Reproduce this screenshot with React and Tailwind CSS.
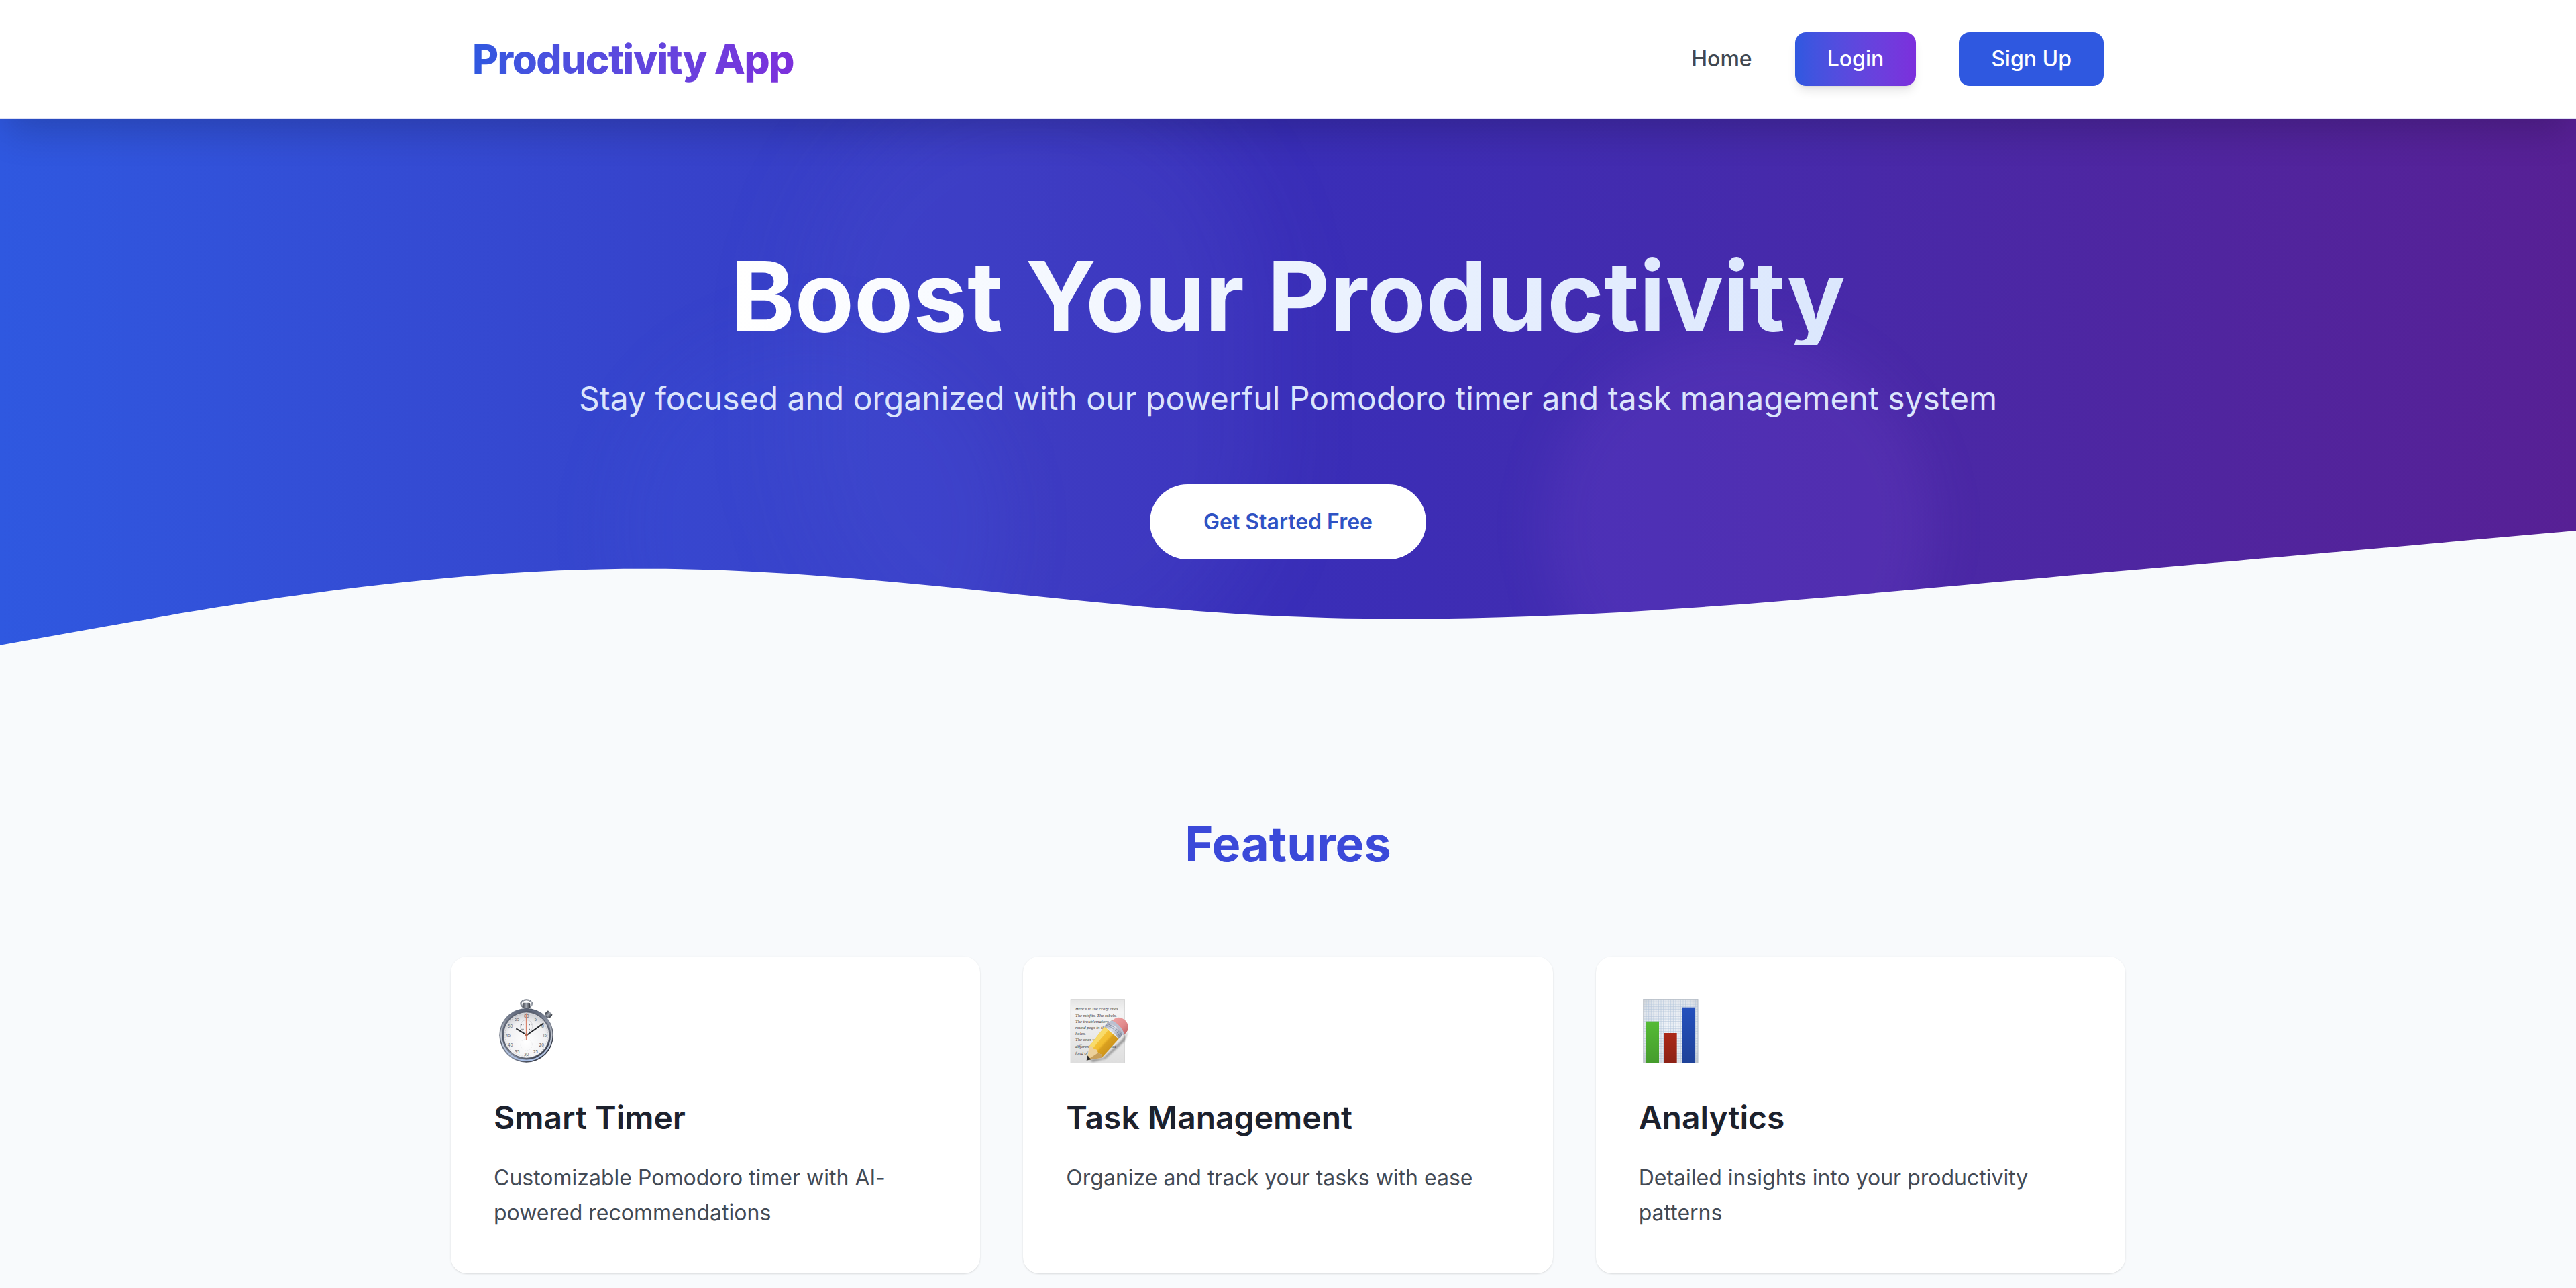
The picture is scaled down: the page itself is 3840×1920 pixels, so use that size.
function StopwatchIcon() {
  const marks = [
    ["60", 146, 112], ["5", 187, 125], ["10", 216, 157], ["15", 228, 199], ["20", 214, 240], ["25", 187, 270],
    ["30", 146, 283], ["35", 104, 270], ["40", 74, 240], ["45", 64, 199], ["50", 74, 157], ["55", 104, 125],
  ];
  const ticks = Array.from({ length: 60 }, (_, i) => i * 6);
  return (
    <svg viewBox="0 30 288 288" className="h-24 w-24 overflow-visible" role="img" aria-label="Stopwatch">
      <defs>
        <linearGradient id="steel" x1="0" y1="0" x2="1" y2="1">
          <stop offset="0" stopColor="#9aa3b4" />
          <stop offset="0.3" stopColor="#4d5565" />
          <stop offset="0.55" stopColor="#8b93a3" />
          <stop offset="0.8" stopColor="#3a3f4c" />
          <stop offset="1" stopColor="#23262e" />
        </linearGradient>
        <linearGradient id="rim" x1="0" y1="0" x2="0" y2="1">
          <stop offset="0" stopColor="#5b6478" />
          <stop offset="0.5" stopColor="#c3c7cf" />
          <stop offset="1" stopColor="#a9bfe6" />
        </linearGradient>
        <linearGradient id="crown" x1="0" y1="0" x2="1" y2="0">
          <stop offset="0" stopColor="#3b4049" />
          <stop offset="0.5" stopColor="#a3a8b1" />
          <stop offset="1" stopColor="#32363e" />
        </linearGradient>
        <radialGradient id="dial" cx="0.5" cy="0.65" r="0.6">
          <stop offset="0" stopColor="#ffffff" />
          <stop offset="0.75" stopColor="#f0f0f2" />
          <stop offset="1" stopColor="#d3d4d8" />
        </radialGradient>
      </defs>
      <ellipse cx="146" cy="49" rx="25" ry="18" fill="none" stroke="#6d7480" strokeWidth="6" />
      <ellipse cx="146" cy="49" rx="25" ry="18" fill="none" stroke="#c4c9d0" strokeWidth="2" />
      <rect x="136" y="60" width="20" height="16" fill="#7d838f" />
      <rect x="128" y="44" width="35" height="23" rx="5" fill="url(#crown)" />
      <g transform="rotate(42 244 98)">
        <rect x="237" y="98" width="14" height="20" fill="#5a606c" />
        <rect x="229" y="84" width="30" height="23" rx="6" fill="url(#crown)" />
      </g>
      <circle cx="146" cy="190" r="121" fill="url(#steel)" />
      <circle cx="146" cy="189" r="113" fill="none" stroke="url(#rim)" strokeWidth="7" />
      <circle cx="146" cy="188" r="105" fill="#5d6372" />
      <circle cx="146" cy="189" r="101" fill="url(#dial)" />
      <g stroke="#9a9ca2" strokeWidth="1">
        {ticks.map((a) => (
          <line key={a} x1="146" y1="91" x2="146" y2="96" transform={`rotate(${a} 146 189)`} />
        ))}
      </g>
      <g fill="none" stroke="#c2c3c8" strokeWidth="2">
        <circle cx="146" cy="149" r="28" />
        <circle cx="146" cy="232" r="26" strokeDasharray="3 8" opacity="0.6" />
      </g>
      <g fill="#55575d" fontFamily="Inter, sans-serif" fontSize="18" textAnchor="middle">
        {marks.map(([n, x, y]) => (
          <text key={n} x={x} y={y}>{n}</text>
        ))}
      </g>
      <g stroke="#777a80" strokeWidth="4" strokeDasharray="4 3">
        <path d="M122,143h12M158,143h12M124,163h10M158,163h10" />
      </g>
      <path d="M146,92V213" stroke="#d9846c" strokeWidth="5" />
      <path d="M100,160L148,189L223,136" fill="none" stroke="#26292e" strokeWidth="6" strokeLinejoin="round" />
      <circle cx="146" cy="188" r="6" fill="#b8664f" />
    </svg>
  );
}

function MemoIcon() {
  const lines = [
    ["Here's to the crazy ones", 79], ["The misfits. The rebels.", 108], ["The troublemakers. The", 136], ["round pegs in the", 163],
    ["holes.", 188], ["The ones who see", 217], ["differently. They’re not", 247], ["fond of rules", 276],
  ];
  return (
    <svg viewBox="0 30 288 288" className="h-24 w-24 overflow-visible" role="img" aria-label="Memo">
      <defs>
        <linearGradient id="paper" x1="0" y1="0" x2="0" y2="1">
          <stop offset="0" stopColor="#e4e4e4" />
          <stop offset="0.2" stopColor="#f4f4f4" />
          <stop offset="1" stopColor="#dedede" />
        </linearGradient>
        <linearGradient id="wood" x1="0" y1="0" x2="1" y2="1">
          <stop offset="0" stopColor="#f5d052" />
          <stop offset="0.5" stopColor="#f2bd2f" />
          <stop offset="0.55" stopColor="#d9a01f" />
          <stop offset="1" stopColor="#b97f16" />
        </linearGradient>
        <linearGradient id="ferrule" x1="0" y1="0" x2="1" y2="1">
          <stop offset="0" stopColor="#8e97ab" />
          <stop offset="0.4" stopColor="#dfe4ee" />
          <stop offset="1" stopColor="#717a90" />
        </linearGradient>
        <linearGradient id="eraser" x1="0" y1="0" x2="1" y2="1">
          <stop offset="0" stopColor="#f2aaa9" />
          <stop offset="0.6" stopColor="#e18a8c" />
          <stop offset="1" stopColor="#b9595d" />
        </linearGradient>
        <filter id="soft" x="-20%" y="-20%" width="140%" height="140%">
          <feGaussianBlur stdDeviation="5" />
        </filter>
      </defs>
      <rect x="21" y="29" width="242" height="285" fill="url(#paper)" stroke="#cccccc" strokeWidth="2" />
      <g fill="#3a3a3c" fontFamily="'Liberation Serif', serif" fontStyle="italic" fontSize="20">
        {lines.map(([t, y]) => (
          <text key={y} x="42" y={y}>{t}</text>
        ))}
      </g>
      <path d="M106,300L168,292L250,212L278,172L262,215L176,294L120,308Z" fill="#000000" opacity="0.4" filter="url(#soft)" />
      <path d="M104,240L172,152L236,206L160,290L128,288Z" fill="url(#wood)" />
      <path d="M104,240L172,152L190,166L122,246Z" fill="#f8db6a" />
      <path d="M104,240L114,238L124,248L138,254L144,268L160,276L160,290L94,301Z" fill="#ecd09a" />
      <path d="M144,268L160,276L160,290L94,301Z" fill="#c79f5c" />
      <path d="M97,280L112,298L92,302Z" fill="#2b2b2b" />
      <path d="M172,152Q176,140 190,133Q236,150 256,182Q248,198 236,206Q216,172 172,152Z" fill="url(#ferrule)" />
      <path d="M179,144Q224,160 243,199M184,138Q230,156 250,190" fill="none" stroke="#6b758d" strokeWidth="2" />
      <path d="M190,133Q206,130 214,118Q236,102 262,120Q284,140 277,166Q268,184 256,190Q240,152 190,133Z" fill="url(#eraser)" />
      <path d="M190,133Q198,126 206,124Q246,142 262,186L256,190Q240,152 190,133Z" fill="#b9c1d1" />
    </svg>
  );
}

function ChartIcon() {
  const grid = Array.from({ length: 26 }, (_, i) => 22 + i * 11);
  return (
    <svg viewBox="0 30 288 288" className="h-24 w-24 overflow-visible" role="img" aria-label="Bar chart">
      <defs>
        <radialGradient id="sheet" cx="0.5" cy="0.45" r="0.75">
          <stop offset="0" stopColor="#f1f5fa" />
          <stop offset="0.7" stopColor="#e0e5eb" />
          <stop offset="1" stopColor="#bfc3c8" />
        </radialGradient>
        <linearGradient id="green" x1="0" y1="0" x2="0" y2="1">
          <stop offset="0" stopColor="#55bb35" />
          <stop offset="1" stopColor="#459c2c" />
        </linearGradient>
        <linearGradient id="red" x1="0" y1="0" x2="0" y2="1">
          <stop offset="0" stopColor="#ab2818" />
          <stop offset="1" stopColor="#8c2115" />
        </linearGradient>
        <linearGradient id="blue" x1="0" y1="0" x2="0" y2="1">
          <stop offset="0" stopColor="#2450bd" />
          <stop offset="1" stopColor="#1f4299" />
        </linearGradient>
      </defs>
      <rect x="20" y="28" width="244" height="286" fill="url(#sheet)" />
      <g stroke="#b3c6db" strokeWidth="2">
        {grid.map((v) => (
          <line key={v} x1="20" x2="264" y1={v + 7} y2={v + 7} />
        ))}
        {grid.slice(0, 23).map((v) => (
          <line key={v} x1={v} x2={v} y1="28" y2="314" />
        ))}
      </g>
      <rect x="20" y="28" width="244" height="286" fill="none" stroke="#b9bec4" strokeWidth="2" />
      <rect x="33" y="128" width="57" height="185" fill="url(#green)" />
      <rect x="113" y="180" width="57" height="133" fill="url(#red)" />
      <rect x="194" y="65" width="56" height="248" fill="url(#blue)" />
    </svg>
  );
}

const features = [
  { Icon: StopwatchIcon, title: "Smart Timer", text: "Customizable Pomodoro timer with AI-powered recommendations" },
  { Icon: MemoIcon, title: "Task Management", text: "Organize and track your tasks with ease" },
  { Icon: ChartIcon, title: "Analytics", text: "Detailed insights into your productivity patterns" },
];

export default function App() {
  return (
    <div className="min-h-screen bg-[#f8fafc] font-['Inter',sans-serif] text-[32px] leading-[48px]">
      <header className="relative z-10 border-b-2 border-[#e0e2f4] bg-white shadow-[0_24px_56px_-8px_rgba(0,0,0,0.2)]">
        <nav className="mx-auto flex h-44 max-w-[2560px] items-center justify-between px-16">
          <a href="#" className="bg-linear-to-r from-[#2f58e0] to-[#7c2fdc] bg-clip-text text-[60px] leading-[72px] font-extrabold tracking-tight text-transparent">Productivity App</a>
          <div className="flex items-center gap-16 font-medium">
            <a href="#" className="text-[#414852]">Home</a>
            <button className="rounded-2xl bg-linear-to-r from-[#2f58e0] to-[#7c2fdc] px-12 py-4 text-white shadow-lg">Login</button>
            <button className="rounded-2xl bg-[#2f58e0] px-12 py-4 text-white">Sign Up</button>
          </div>
        </nav>
      </header>
      <section className="relative overflow-hidden bg-linear-to-r from-[#2f58e0] via-[#392eb8] to-[#572095] px-16 py-48 text-center">
        <div className="absolute -top-16 left-[31%] h-[900px] w-[700px] rounded-full bg-[#6060e0]/12 blur-[64px]" />
        <div className="absolute top-[320px] left-[24%] h-[576px] w-[576px] rounded-full bg-[#3f63ee]/12 blur-[48px]" />
        <div className="absolute top-[320px] left-[60%] h-[576px] w-[576px] rounded-full bg-[#8a4fe0]/15 blur-[36px]" />
        <svg viewBox="0 160 1440 88" preserveAspectRatio="none" className="absolute inset-x-0 bottom-0 w-full" aria-hidden="true">
          <path fill="#f8fafc" d="M0,224L60,213.3C120,203,240,181,360,181.3C480,181,600,203,720,208C840,213,960,203,1080,192C1200,181,1320,171,1380,165.3L1440,160L1440,320L0,320Z" />
        </svg>
        <div className="relative flex flex-col items-center">
          <h1 className="mb-12 bg-linear-to-r from-white to-[#dbe7fd] bg-clip-text text-[144px] leading-[144px] font-bold text-transparent">Boost Your Productivity</h1>
          <p className="mb-24 text-[48px] leading-[64px] text-[#dbe5fc]">Stay focused and organized with our powerful Pomodoro timer and task management system</p>
          <button className="rounded-full bg-white px-20 py-8 font-semibold text-[#2f52c4]">Get Started Free</button>
        </div>
      </section>
      <section className="mx-auto max-w-[2560px] px-8 pt-48">
        <h2 className="mb-32 text-center text-[72px] leading-[80px] font-bold text-[#3b49d9]">Features</h2>
        <div className="grid grid-cols-3 gap-16">
          {features.map(({ Icon, title, text }) => (
            <article key={title} className="rounded-3xl bg-white p-16 shadow-sm">
              <div className="mb-12">
                <Icon />
              </div>
              <h3 className="mb-8 text-[48px] leading-[64px] font-semibold text-[#1c212d]">{title}</h3>
              <p className="leading-[52px] text-[#434a55]">{text}</p>
            </article>
          ))}
        </div>
      </section>
    </div>
  );
}
